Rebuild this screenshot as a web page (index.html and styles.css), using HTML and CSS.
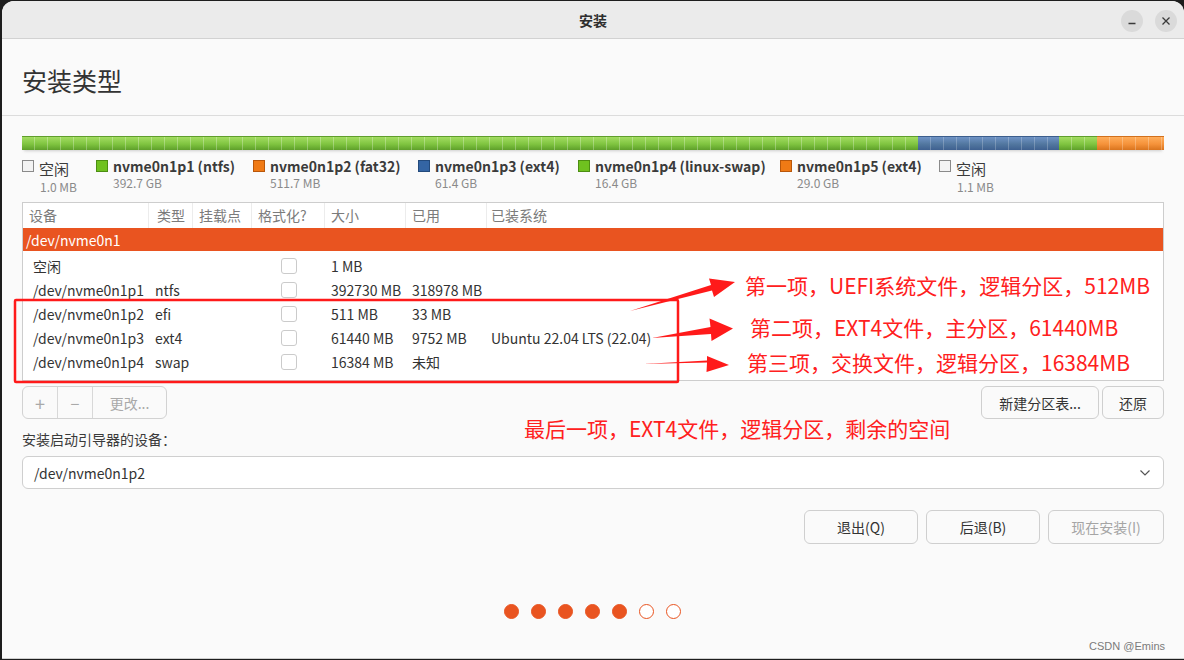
FILE: index.html
```html
<!DOCTYPE html>
<html lang="zh-CN">
<head>
<meta charset="utf-8">
<title>安装</title>
<link rel="stylesheet" href="styles.css">
</head>
<body>
<div class="window">
  <header class="titlebar">
    <div class="title">安装</div>
    <div class="wbtns">
      <span class="wbtn"><svg width="10" height="10" viewBox="0 0 10 10"><path d="M1.5 7.5h7" stroke="#3a3a3a" stroke-width="1.3"/></svg></span>
      <span class="wbtn"><svg width="10" height="10" viewBox="0 0 10 10"><path d="M1.5 1.5l7 7M8.5 1.5l-7 7" stroke="#3a3a3a" stroke-width="1.3"/></svg></span>
    </div>
  </header>
  <main class="content">
    <h1 class="heading">安装类型</h1>
    <div class="sep"></div>
    <div class="pbar">
      <div class="seg green w1"></div>
      <div class="seg blue w2"></div>
      <div class="seg green w3"></div>
      <div class="seg orange w4"></div>
    </div>
    <div class="legend">
      <div class="litem free"><span class="sw sw-free"></span><div class="ltext"><div class="lname">空闲</div><div class="lsize">1.0 MB</div></div></div>
      <div class="litem"><span class="sw sw-green"></span><div class="ltext"><div class="lname">nvme0n1p1 (ntfs)</div><div class="lsize">392.7 GB</div></div></div>
      <div class="litem"><span class="sw sw-orange"></span><div class="ltext"><div class="lname">nvme0n1p2 (fat32)</div><div class="lsize">511.7 MB</div></div></div>
      <div class="litem"><span class="sw sw-blue"></span><div class="ltext"><div class="lname">nvme0n1p3 (ext4)</div><div class="lsize">61.4 GB</div></div></div>
      <div class="litem"><span class="sw sw-green"></span><div class="ltext"><div class="lname">nvme0n1p4 (linux-swap)</div><div class="lsize">16.4 GB</div></div></div>
      <div class="litem"><span class="sw sw-orange"></span><div class="ltext"><div class="lname">nvme0n1p5 (ext4)</div><div class="lsize">29.0 GB</div></div></div>
      <div class="litem free"><span class="sw sw-free"></span><div class="ltext"><div class="lname">空闲</div><div class="lsize">1.1 MB</div></div></div>
    </div>

    <div class="table">
      <div class="row head">
        <div class="c c1">设备</div><div class="c c2">类型</div><div class="c c3">挂载点</div><div class="c c4">格式化?</div><div class="c c5">大小</div><div class="c c6">已用</div><div class="c c7">已装系统</div>
      </div>
      <div class="row disk"><div class="c c1">/dev/nvme0n1</div></div>
      <div class="rows">
        <div class="row"><div class="c c1 dev">空闲</div><div class="c c2"></div><div class="c c3"></div><div class="c c4"><span class="cb"></span></div><div class="c c5">1 MB</div><div class="c c6"></div><div class="c c7"></div></div>
        <div class="row"><div class="c c1 dev">/dev/nvme0n1p1</div><div class="c c2">ntfs</div><div class="c c3"></div><div class="c c4"><span class="cb"></span></div><div class="c c5">392730 MB</div><div class="c c6">318978 MB</div><div class="c c7"></div></div>
        <div class="row"><div class="c c1 dev">/dev/nvme0n1p2</div><div class="c c2">efi</div><div class="c c3"></div><div class="c c4"><span class="cb"></span></div><div class="c c5">511 MB</div><div class="c c6">33 MB</div><div class="c c7"></div></div>
        <div class="row"><div class="c c1 dev">/dev/nvme0n1p3</div><div class="c c2">ext4</div><div class="c c3"></div><div class="c c4"><span class="cb"></span></div><div class="c c5">61440 MB</div><div class="c c6">9752 MB</div><div class="c c7">Ubuntu 22.04 LTS (22.04)</div></div>
        <div class="row"><div class="c c1 dev">/dev/nvme0n1p4</div><div class="c c2">swap</div><div class="c c3"></div><div class="c c4"><span class="cb"></span></div><div class="c c5">16384 MB</div><div class="c c6">未知</div><div class="c c7"></div></div>
      </div>
    </div>

    <div class="toolrow">
      <div class="bgroup">
        <span class="gb plus">+</span><span class="gb minus">−</span><span class="gb change">更改...</span>
      </div>
      <div class="rbtns">
        <button class="btn newtable">新建分区表...</button>
        <button class="btn revert">还原</button>
      </div>
    </div>

    <div class="label">安装启动引导器的设备：</div>
    <div class="combo">
      <span>/dev/nvme0n1p2</span>
      <svg width="12" height="8" viewBox="0 0 12 8"><path d="M1.5 1.5l4.5 4.5 4.5-4.5" fill="none" stroke="#555" stroke-width="1.2"/></svg>
    </div>

    <div class="actions">
      <button class="btn act">退出(Q)</button>
      <button class="btn act">后退(B)</button>
      <button class="btn act disabled">现在安装(I)</button>
    </div>

    <div class="dots">
      <span class="dot on"></span><span class="dot on"></span><span class="dot on"></span><span class="dot on"></span><span class="dot on"></span><span class="dot"></span><span class="dot"></span>
    </div>
  </main>

  <div class="watermark">CSDN @Emins</div>

  <svg class="annot" width="1184" height="660" viewBox="0 0 1184 660">
    <rect x="15" y="300" width="663" height="82" fill="none" stroke="#ff1a1a" stroke-width="2.5" rx="1"/>
    <polygon points="630,311 712,290.5 714,297 735,282 709,278.5 711,285" fill="#ff1a1a"/>
    <polygon points="652,338 711,334 711.5,341 733,328.5 709.5,318.5 710.5,327" fill="#ff1a1a"/>
    <polygon points="643,364 707,362.5 706.5,372 729,365 707,356 707,360.5" fill="#ff1a1a"/>
  </svg>
  <div class="note n1">第一项，UEFI系统文件，逻辑分区，512MB</div>
  <div class="note n2">第二项，EXT4文件，主分区，61440MB</div>
  <div class="note n3">第三项，交换文件，逻辑分区，16384MB</div>
  <div class="note n4">最后一项，EXT4文件，逻辑分区，剩余的空间</div>
</div>
</body>
</html>
```
FILE: styles.css
```css
* { box-sizing: border-box; }
html, body {
  margin: 0;
  padding: 0;
  width: 1184px;
  height: 660px;
  overflow: hidden;
  background: #1d1d1d;
  font-family: "Noto Sans CJK SC", "Noto Sans", sans-serif;
}
.window {
  position: relative;
  margin: 1px 0 0 2px;
  width: 1182px;
  height: 658px;
  background: #fafafa;
  border-radius: 12px 12px 0 0;
  border-bottom: 1px solid #cfcfcf;
  overflow: hidden;
}
.titlebar {
  height: 38px;
  background: #ebebeb;
  border-bottom: 1px solid #d2d2d2;
  display: flex;
  align-items: center;
  justify-content: center;
  position: relative;
}
.title {
  font-size: 14px;
  font-weight: bold;
  color: #2e2e2e;
  line-height: 20px;
}
.wbtns {
  position: absolute;
  right: 7px;
  top: 9px;
  display: flex;
  gap: 12px;
}
.wbtn {
  width: 22px;
  height: 22px;
  border-radius: 50%;
  background: #dadada;
  display: flex;
  align-items: center;
  justify-content: center;
}
.content {
  padding: 0 20px;
  display: flex;
  flex-direction: column;
}
.heading {
  margin: 25px 0 0 0;
  font-size: 25px;
  font-weight: normal;
  line-height: 32px;
  color: #333;
}
.sep {
  margin: 19px -22px 0 -22px;
  height: 1px;
  background: #dcdcdc;
}
.pbar {
  margin-top: 20px;
  height: 14px;
  display: flex;
  box-shadow: 0 3px 3px -2px rgba(120,120,120,0.35);
}
.seg { height: 14px; }
.w1 { width: 896px; }
.w2 { width: 141px; }
.w3 { width: 38px; }
.w4 { flex: 1; }
.green {
  background:
    repeating-linear-gradient(90deg, transparent 0 12px, rgba(255,255,255,0.28) 12px 13px),
    linear-gradient(#a3dc62, #7fc440 55%, #5e9f2a);
  border-top: 1px solid #5f9e2c;
}
.blue {
  background:
    repeating-linear-gradient(90deg, transparent 0 12px, rgba(255,255,255,0.22) 12px 13px),
    linear-gradient(#6f93c6, #52779f 55%, #3e6090);
  border-top: 1px solid #3c5e8c;
}
.orange {
  background:
    repeating-linear-gradient(90deg, transparent 0 12px, rgba(255,255,255,0.25) 12px 13px),
    linear-gradient(#ffad5a, #f5923a 55%, #d9741e);
  border-top: 1px solid #d2701c;
}
.legend {
  margin-top: 7px;
  display: grid;
  grid-template-columns: 74px 157px 165px 160px 202px 159px auto;
}
.litem {
  display: flex;
  align-items: flex-start;
  gap: 5px;
}
.sw {
  width: 12px;
  height: 12px;
  margin-top: 3px;
  border: 1px solid #777;
  flex: none;
}
.sw-free { background: #f3f3f3; border-color: #8a8a8a; }
.sw-green { background: #6fc11f; border-color: #4c8e12; }
.sw-orange { background: #f07a15; border-color: #b9570a; }
.sw-blue { background: #3465a4; border-color: #234a7c; }
.lname {
  font-size: 14px;
  font-weight: bold;
  line-height: 18px;
  color: #3b3b3b;
}
.lsize {
  font-size: 12px;
  line-height: 16px;
  color: #8a8a8a;
}
.free .lname {
  font-size: 15px;
  font-weight: normal;
  line-height: 21px;
  margin-top: 1px;
}
.free .lsize { padding-left: 1px; }

.table {
  margin-top: 7px;
  background: #fff;
  border: 1px solid #cdcdcd;
  height: 179px;
  display: flex;
  flex-direction: column;
}
.row {
  display: grid;
  grid-template-columns: 126px 44px 59px 73px 81px 81px 1fr;
  height: 24px;
  align-items: center;
  font-size: 14px;
  color: #333;
}
.c { white-space: nowrap; padding-left: 6px; }
.head {
  height: 25px;
  align-items: stretch;
}
.head .c {
  color: #7b7b7b;
  line-height: 25px;
  border-right: 1px solid #ececec;
}
.head .c2 { padding-left: 8px; }
.head .c4 { display: block; padding-left: 6px; }
.head .c7 { border-right: none; }
.disk {
  height: 23px;
  background: #e95420;
  color: #fff;
  display: flex;
}
.disk .c1 { padding-left: 3px; }
.rows { padding-top: 3px; }
.c1.dev { padding-left: 10px; }
.c4 { display: flex; justify-content: center; padding-left: 0; }
.c7 { padding-left: 4px; }
.cb {
  width: 16px;
  height: 16px;
  border: 1px solid #cbcbcb;
  border-radius: 3px;
  background: #fff;
  display: block;
}

.toolrow {
  margin-top: 5px;
  height: 33px;
  display: flex;
  justify-content: space-between;
}
.bgroup {
  display: flex;
  border: 1px solid #d2d2d2;
  border-radius: 6px;
  width: 145px;
  height: 33px;
  overflow: hidden;
}
.gb {
  display: flex;
  align-items: center;
  justify-content: center;
  color: #a9a9a9;
  font-size: 14px;
  border-right: 1px solid #d8d8d8;
}
.gb.plus { width: 35px; font-size: 18px; }
.gb.minus { width: 35px; font-size: 16px; }
.gb.change { flex: 1; border-right: none; }
.rbtns { display: flex; gap: 3px; }
.btn {
  font-family: "Noto Sans CJK SC", "Noto Sans", sans-serif;
  font-size: 14px;
  color: #333;
  background: #fafafa;
  border: 1px solid #cfcfcf;
  border-radius: 6px;
  height: 33px;
  padding: 0;
}
.newtable { width: 118px; }
.revert { width: 62px; }
.label {
  margin-top: 10px;
  font-size: 14px;
  line-height: 20px;
  color: #3a3a3a;
}
.combo {
  margin-top: 7px;
  height: 33px;
  background: #fff;
  border: 1px solid #cfcfcf;
  border-radius: 6px;
  display: flex;
  align-items: center;
  justify-content: space-between;
  padding: 0 12px 0 11px;
  font-size: 14px;
  color: #333;
}
.actions {
  margin-top: 21px;
  display: flex;
  justify-content: flex-end;
  gap: 8px;
}
.act { width: 114px; height: 34px; }
.act.disabled { color: #a5a5a5; width: 116px; }
.dots {
  margin-top: 60px;
  display: flex;
  justify-content: center;
  gap: 12px;
  padding-right: 2px;
}
.dot {
  width: 15px;
  height: 15px;
  border-radius: 50%;
  border: 1.5px solid #e95420;
  background: #fff;
}
.dot.on { background: #e95420; }
.watermark {
  position: absolute;
  right: 19px;
  bottom: 6px;
  font-family: "Liberation Sans", sans-serif;
  font-size: 11px;
  color: #7a7a7a;
}
.annot {
  position: absolute;
  left: -2px;
  top: -1px;
  pointer-events: none;
}
.note {
  position: absolute;
  font-family: "Noto Sans CJK SC", sans-serif;
  font-size: 21px;
  line-height: 28px;
  color: #ff2020;
  white-space: nowrap;
}
.n1 { left: 743px; top: 270px; }
.n2 { left: 748px; top: 312px; }
.n3 { left: 745px; top: 347px; }
.n4 { left: 522px; top: 413px; }
```
